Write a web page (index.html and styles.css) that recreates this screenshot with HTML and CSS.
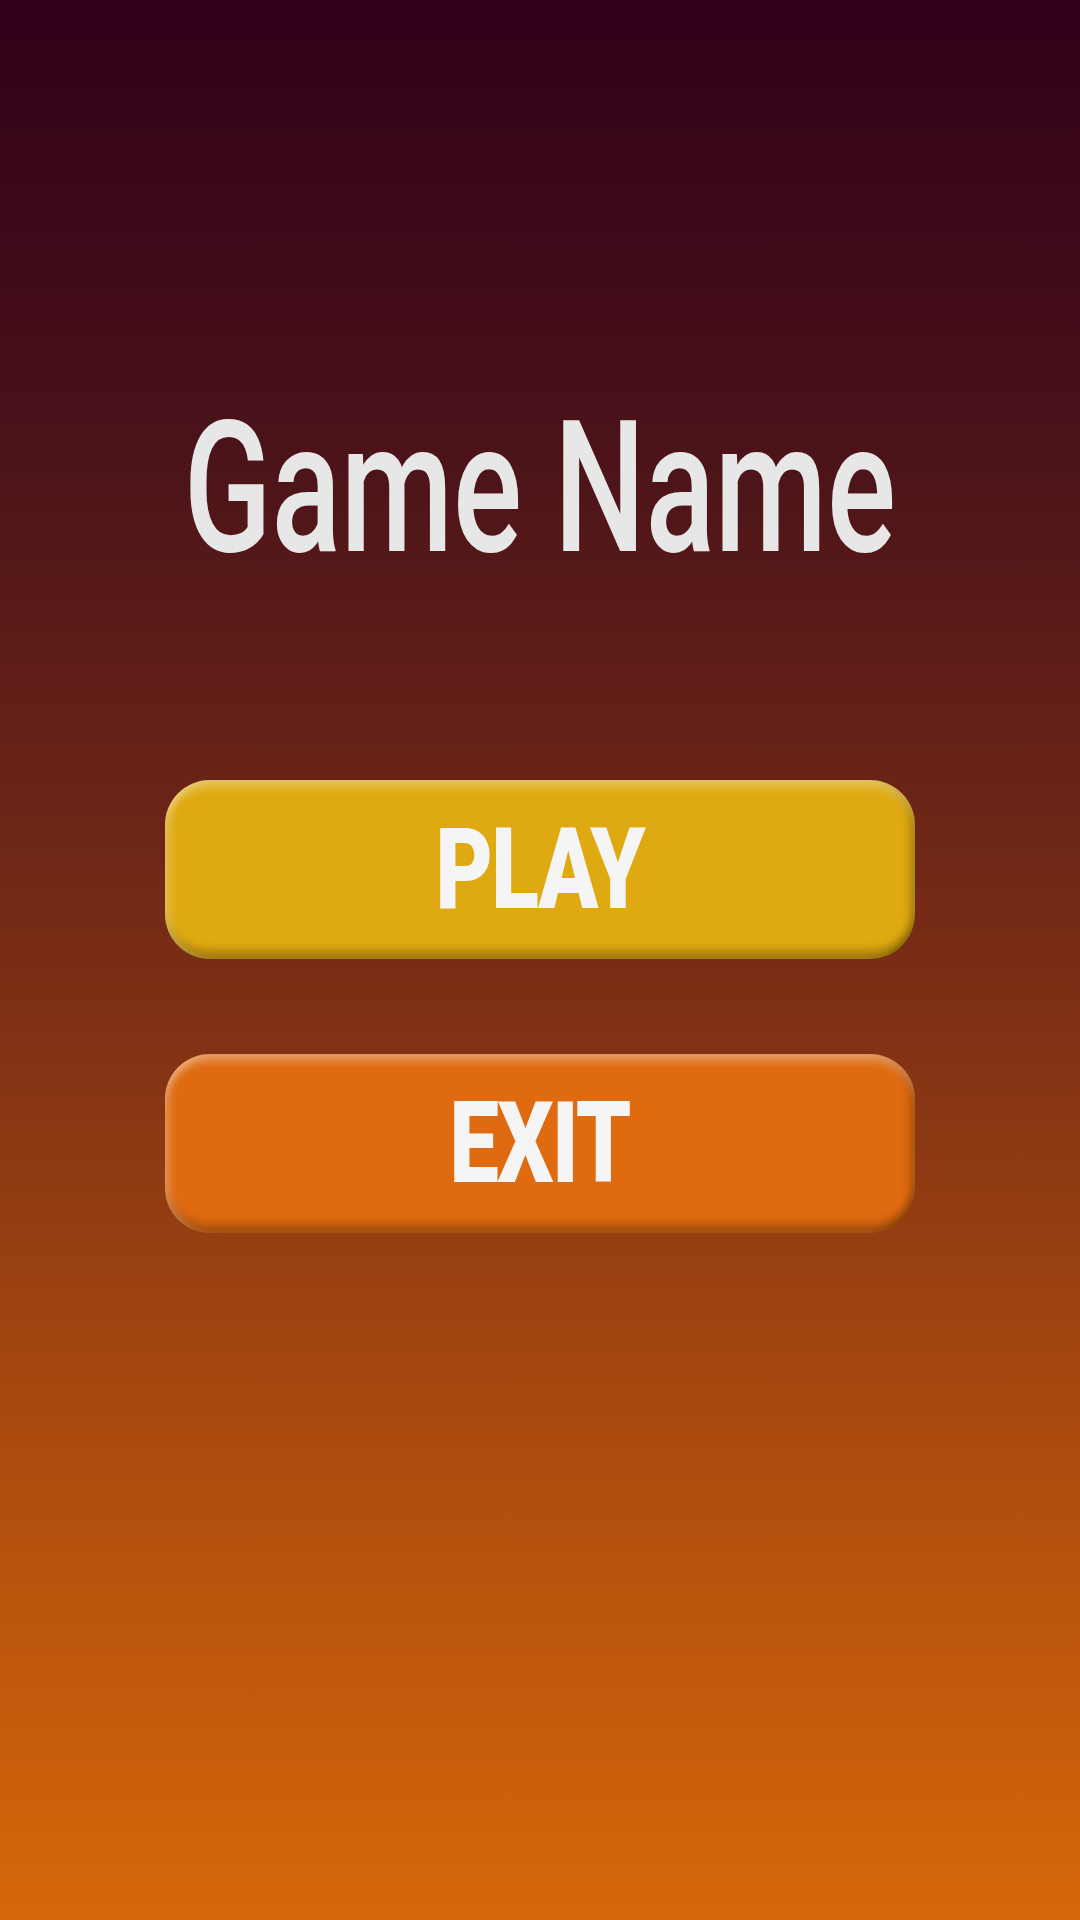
FILE: index.html
```html
<!DOCTYPE html>
<html>
<head>
<meta charset="utf-8">
<link rel="stylesheet" href="styles.css">
</head>
<body>
<main class="screen">
  <h1 class="title"><span class="title-text">Game Name</span></h1>
  <div class="menu">
    <button class="btn btn-play"><span class="btn-label">PLAY</span></button>
    <button class="btn btn-exit"><span class="btn-label">EXIT</span></button>
  </div>
</main>
</body>
</html>
```
FILE: styles.css
```css
html, body {
  margin: 0;
  padding: 0;
}
body {
  width: 1080px;
  height: 1920px;
  overflow: hidden;
  background: linear-gradient(180deg, #300019 0%, #4d1419 25%, #7b2e15 51%, #ad4c0e 76%, #d6680a 100%);
  font-family: "Roboto", "Liberation Sans", sans-serif;
}
.screen {
  display: flex;
  flex-direction: column;
  align-items: center;
  padding-top: 396px;
}
.title {
  margin: 0;
  font-size: 184px;
  line-height: 184px;
  font-weight: 500;
  color: #e7e7e7;
  height: 184px;
  display: flex;
  justify-content: center;
}
.title-text {
  display: inline-block;
  transform: scaleX(0.7);
  white-space: nowrap;
}
.menu {
  margin-top: 200px;
  display: flex;
  flex-direction: column;
  gap: 95px;
}
.btn {
  width: 750px;
  height: 179px;
  border: none;
  border-radius: 45px;
  display: flex;
  align-items: center;
  justify-content: center;
  padding: 0;
  font-family: "Roboto", "Liberation Sans", sans-serif;
  font-weight: 900;
  font-size: 113px;
  color: #f5f5f5;
  box-shadow:
    inset 0 11px 10px -4px rgba(255, 255, 255, 0.33),
    inset 8px 0 10px -4px rgba(255, 255, 255, 0.3),
    inset -8px 0 10px -4px rgba(0, 0, 0, 0.28),
    inset 0 -12px 10px -4px rgba(0, 0, 0, 0.28);
}
.btn-play {
  background: #dfa911;
}
.btn-exit {
  background: #df6a10;
}
.btn-label {
  display: inline-block;
  transform: scaleX(0.78);
  letter-spacing: -2px;
  line-height: 1;
}
```
